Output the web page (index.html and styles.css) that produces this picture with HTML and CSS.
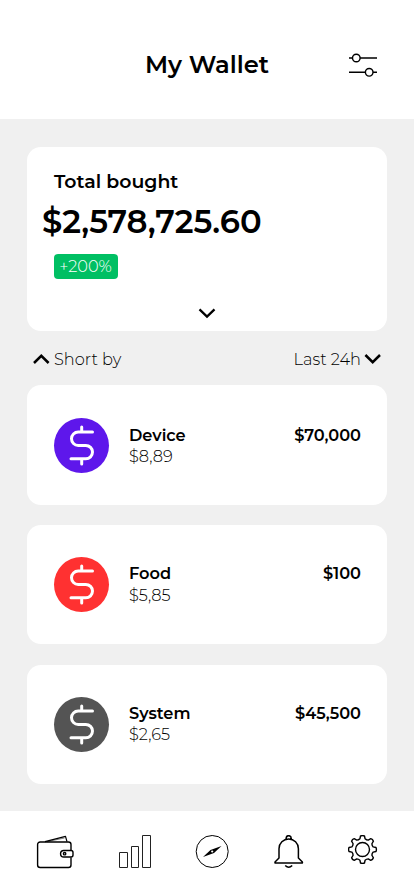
FILE: index.html
```html
<!DOCTYPE html>
<html lang="en">
<head>
<meta charset="utf-8">
<meta name="viewport" content="width=device-width, initial-scale=1">
<title>My Wallet</title>
<link rel="stylesheet" href="styles.css">
</head>
<body>
<svg width="0" height="0" class="defs">
  <symbol id="dollar" viewBox="0 0 55 55">
    <path d="M38.500 14H24.200a6.700 6.700 0 0 0 0 13.400h7.600a6.700 6.700 0 0 1 0 13.400H17M27.700 9v5M27.700 41v5" fill="none" stroke="#fff" stroke-width="3" stroke-linecap="round"/>
  </symbol>
</svg>
<div class="app">
  <header class="header">
    <h1 class="title">My Wallet</h1>
    <svg class="filter" width="30" height="24" viewBox="0 0 30 24" fill="none" stroke="#000" stroke-width="1.4">
      <path d="M1 5H4.500M12 5H29M1 19.300H17.300M25 19.300H29"/><circle cx="8.300" cy="5" r="3.800"/><circle cx="21.200" cy="19.300" r="3.800"/>
    </svg>
  </header>
  <main class="main">
    <section class="card summary">
      <h2 class="label">Total bought</h2>
      <div class="amount">$2,578,725.60</div>
      <span class="badge">+200%</span>
      <svg class="expand" width="18" height="12" viewBox="0 0 18 12"><path d="M1.500 2.400l7.500 7.200L16.500 2.400" fill="none" stroke="#000" stroke-width="2.300"/></svg>
    </section>
    <div class="sort">
      <svg width="18" height="12" viewBox="0 0 18 12"><path d="M2 10l7.300-7.200L16.600 10" fill="none" stroke="#000" stroke-width="2.500"/></svg>
      <span class="short">Short by</span>
      <span class="last">Last 24h</span>
      <svg width="18" height="12" viewBox="0 0 18 12"><path d="M1.400 2l7.300 7.200L16 2" fill="none" stroke="#000" stroke-width="2.500"/></svg>
    </div>
    <section class="card item lowered">
      <svg class="coin violet"><use href="#dollar"/></svg>
      <div class="info"><b>Device</b><span class="sub">$8,89</span></div>
      <b class="value">$70,000</b>
    </section>
    <section class="card item loose">
      <svg class="coin red"><use href="#dollar"/></svg>
      <div class="info"><b>Food</b><span class="sub">$5,85</span></div>
      <b class="value">$100</b>
    </section>
    <section class="card item raised">
      <svg class="coin gray"><use href="#dollar"/></svg>
      <div class="info"><b>System</b><span class="sub">$2,65</span></div>
      <b class="value">$45,500</b>
    </section>
  </main>
  <nav class="nav">
    <svg width="38" height="34" viewBox="0 0 38 34" fill="none" stroke="#000" stroke-width="1.400" stroke-linejoin="round">
      <path d="M35 15V9.500a2.500 2.500 0 0 0-2.500-2.500H4.100A2.500 2.500 0 0 0 1.600 9.500V30A2.500 2.500 0 0 0 4.100 32.500H32.500a2.500 2.500 0 0 0 2.500-2.500V22.500"/>
      <path d="M9 6.700L29.500 1.300 31 6.700" stroke-width="1.200"/><path d="M11 6.700L28.500 3" stroke-width=".5"/>
      <path d="M28.300 15.500H35.500a2 2 0 0 1 2 2V20a2 2 0 0 1-2 2H28.300a3.250 3.250 0 0 1 0-6.500z" transform="translate(-.5 0)"/><circle cx="28.600" cy="18.700" r="1.200"/>
    </svg>
    <svg width="34" height="34" viewBox="0 0 34 34" fill="none" stroke="#222" stroke-width="1">
      <path d="M1.500 17.500h8v15h-8zM13.500 11.500h7v21h-7zM24.500 .500h8v32h-8z"/>
    </svg>
    <svg width="34" height="34" viewBox="0 0 34 34">
      <circle cx="17.200" cy="16.500" r="16" fill="none" stroke="#000" stroke-width="1"/>
      <path d="M8 22L15.500 14.900 26.500 11 19 18z"/><circle cx="17.200" cy="16.500" r="1.100" fill="#fff"/>
    </svg>
    <svg width="32" height="34" viewBox="0 0 32 34" fill="none" stroke="#000" stroke-width="1.500" stroke-linejoin="round">
      <path d="M2 28v-1l4-4V13.700a9.700 9.700 0 0 1 19.400 0v9.300l4 4v1zM13.200 4.200V3.200a2.500 2.500 0 0 1 5 0V4.200M12.200 30.500q3.500 3.500 7 0"/>
    </svg>
    <svg width="30" height="30" viewBox="-14.500 -14.500 30 30" fill="none" stroke="#000" stroke-width="1.400" stroke-linejoin="round">
      <path d="M-2-13.500Q0-14.300 2-13.500L2.600-10.700Q3.900-9.400 5.730-9.400L8.300-10.900Q10.300-10.300 10.900-8.300L9.400-5.730Q9.400-3.900 10.700-2.600L13.500-2Q14.300 0 13.500 2L10.700 2.600Q9.400 3.900 9.400 5.730L10.900 8.300Q10.300 10.300 8.300 10.900L5.730 9.400Q3.900 9.400 2.600 10.700L2 13.500Q0 14.300-2 13.500L-2.600 10.700Q-3.900 9.400-5.730 9.400L-8.300 10.900Q-10.300 10.300-10.900 8.300L-9.400 5.730Q-9.400 3.900-10.700 2.600L-13.500 2Q-14.300 0-13.500-2L-10.700-2.600Q-9.400-3.900-9.400-5.730L-10.900-8.300Q-10.300-10.300-8.300-10.900L-5.730-9.400Q-3.900-9.400-2.600-10.700z"/><circle r="7"/>
    </svg>
  </nav>
</div>
</body>
</html>
```
FILE: styles.css
```css
* { box-sizing: border-box; }
body { margin: 0; background: #f0f0f0; color: #000; font-family: Montserrat, Inter, sans-serif; }
svg { display: block; flex: none; }
h1, h2 { margin: 0; }
b { font-weight: 600; }
.defs { display: none; }
.app { width: 414px; height: 896px; display: flex; flex-direction: column; overflow: hidden; }
.header { height: 119px; background: #fff; display: grid; grid-template-columns: 1fr 124px 1fr; align-items: center; padding-top: 10px; }
.title { grid-column: 2; font-size: 24.200px; font-weight: 600; line-height: 30px; white-space: nowrap; padding-top: 1px; }
.filter { justify-self: end; margin-right: 36px; }
.main { flex: 1; padding: 27.600px 27px 0; }
.card { background: #fff; border-radius: 14px; }
.summary { height: 184px; padding: 24px 0 0 27px; display: flex; flex-direction: column; align-items: flex-start; }
.label { font-size: 18.900px; font-weight: 600; line-height: 22px; }
.amount { margin: 9px 0 0 -12px; font-size: 32.200px; font-weight: 600; line-height: 40px; }
.badge { width: 64px; height: 25px; margin-top: 12.900px; padding: 0 1px 1px 0; border-radius: 4px; background: #00bf63; color: #fff; display: flex; justify-content: center; align-items: center; font-size: 16.200px; font-weight: 300; }
.expand { margin: 28px 0 0 144px; }
.sort { height: 54.900px; padding: 2px 5px 0 5px; display: flex; align-items: center; font-size: 16.200px; font-weight: 300; }
.short { margin-left: 4px; }
.last { margin-left: auto; margin-right: 3px; }
.item { height: 119.300px; margin-bottom: 20.300px; padding: 0 26px 0 27px; display: flex; align-items: center; font-size: 16.200px; }
.coin { width: 55px; height: 55px; border-radius: 50%; }
.violet { background: #5e17eb; }
.red { background: #ff3131; }
.gray { background: #545454; }
.info { margin-left: 20px; display: flex; flex-direction: column; line-height: 21px; }
.sub { font-weight: 300; }
.value { margin-left: auto; padding-bottom: 21px; line-height: 21px; }
.lowered .info, .lowered .value { margin-top: 1px; }
.loose .info { gap: 1px; }
.loose .value { padding-bottom: 22px; }
.raised .info, .raised .value { margin-bottom: 1px; }
.nav { height: 85px; background: #fff; display: flex; justify-content: space-between; align-items: flex-start; padding: 24px 36px 0; }
```
